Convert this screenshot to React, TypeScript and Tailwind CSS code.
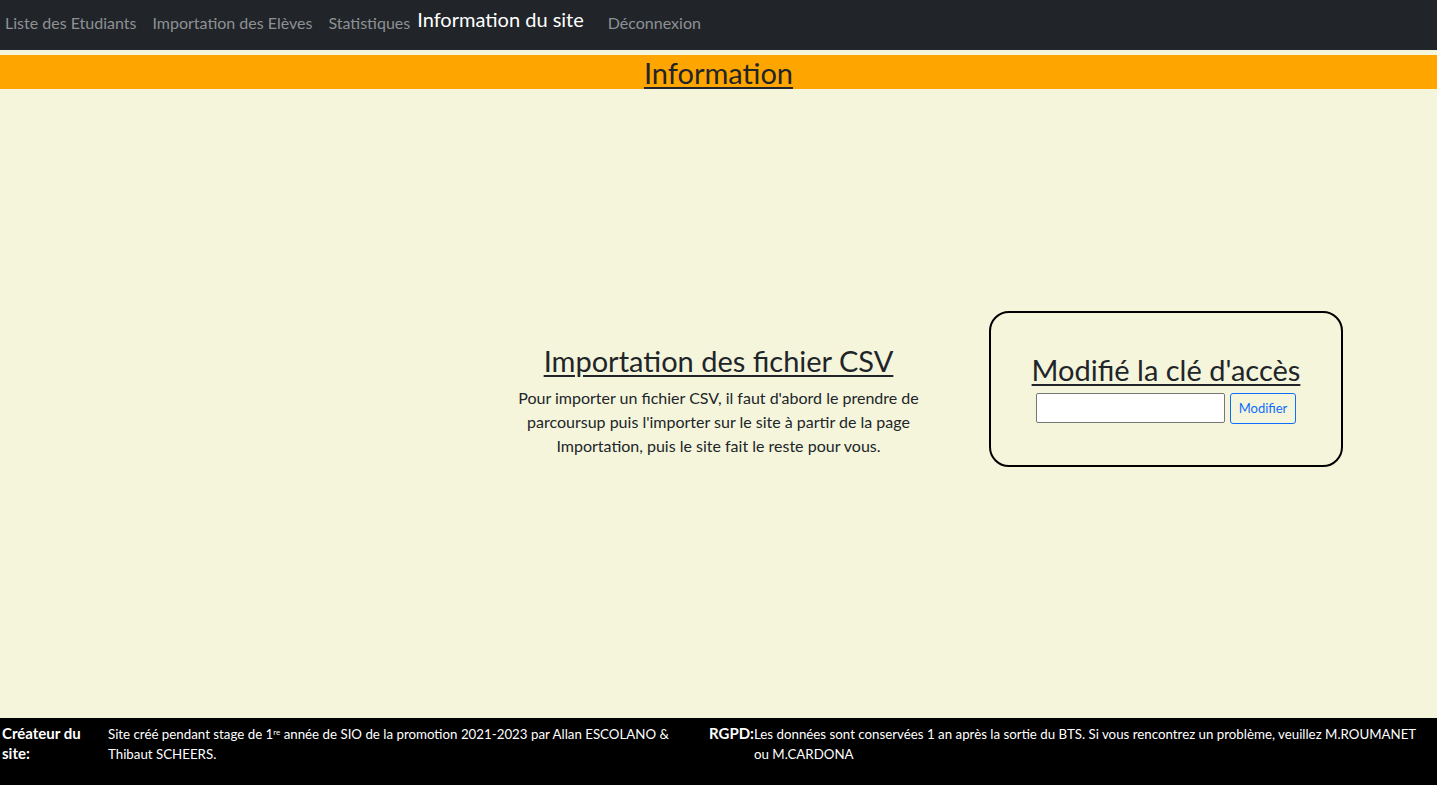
import React from "react";

export default function App() {
  const font = { fontFamily: "Lato, 'Noto Sans', sans-serif" };
  return (
    <div className="min-h-[785px] flex flex-col bg-[#f5f5dc] text-[#212529]" style={font}>
      <nav className="h-[50px] bg-[#212529] flex items-center px-[5px] shrink-0">
        <a className="text-[16px] text-[#8e9194] mr-[16px] -mt-[4px]">Liste des Etudiants</a>
        <a className="text-[16px] text-[#8e9194] mr-[16px] -mt-[4px]">Importation des Elèves</a>
        <a className="text-[16px] text-[#8e9194] mr-[7px] -mt-[4px]">Statistiques</a>
        <a className="text-[20px] text-white mr-[24px] -mt-[13px]">Information du site</a>
        <a className="text-[16px] text-[#8e9194] -mt-[4px]">Déconnexion</a>
      </nav>
      <div className="h-[5px] shrink-0" />
      <div className="h-[34px] bg-[#ffa500] flex items-center justify-center shrink-0">
        <h1 className="text-[29px] underline underline-offset-[3px] leading-none">Information</h1>
      </div>
      <main className="flex-1 grid grid-cols-3 items-center pb-[30px]">
        <div />
        <div className="flex flex-col items-center text-center mt-[25px]">
          <h2 className="text-[29px] underline underline-offset-[3px] leading-[1.2] mb-[7px]">Importation des fichier CSV</h2>
          <p className="text-[16px] leading-[24px] w-[420px]">
            Pour importer un fichier CSV, il faut d'abord le prendre de parcoursup puis l'importer sur le site à partir de la page Importation, puis le site fait le reste pour vous.
          </p>
        </div>
        <div className="ml-[31px] w-[354px] h-[156px] border-2 border-black rounded-[20px] flex flex-col items-center justify-center">
          <h2 className="text-[29px] underline underline-offset-[3px] leading-[1.2] mb-[4px]">Modifié la clé d'accès</h2>
          <div className="flex items-center gap-[5px]">
            <input className="w-[189px] h-[30px] bg-white border border-[#767676] rounded-[2px]" />
            <button className="h-[31px] px-[8px] text-[13px] text-[#0d6efd] border border-[#0d6efd] rounded-[3px] mt-[2px]">Modifier</button>
          </div>
        </div>
      </main>
      <footer className="h-[67px] bg-black text-white flex pt-[5px] shrink-0">
        <div className="w-[709px] flex">
          <div className="w-[108px] pl-[2px] text-[15px] font-bold leading-[20px] shrink-0">Créateur du site:</div>
          <div className="text-[13.3px] leading-[20px] w-[590px] pt-[1px]">
            Site créé pendant stage de 1<sup className="text-[8px]">re</sup> année de SIO de la promotion 2021-2023 par Allan ESCOLANO &amp; Thibaut SCHEERS.
          </div>
        </div>
        <div className="flex flex-1">
          <div className="text-[15px] font-bold leading-[20px] shrink-0">RGPD:</div>
          <div className="text-[13.3px] leading-[20px] w-[668px] pt-[1px]">
            Les données sont conservées 1 an après la sortie du BTS. Si vous rencontrez un problème, veuillez M.ROUMANET ou M.CARDONA
          </div>
        </div>
      </footer>
    </div>
  );
}
